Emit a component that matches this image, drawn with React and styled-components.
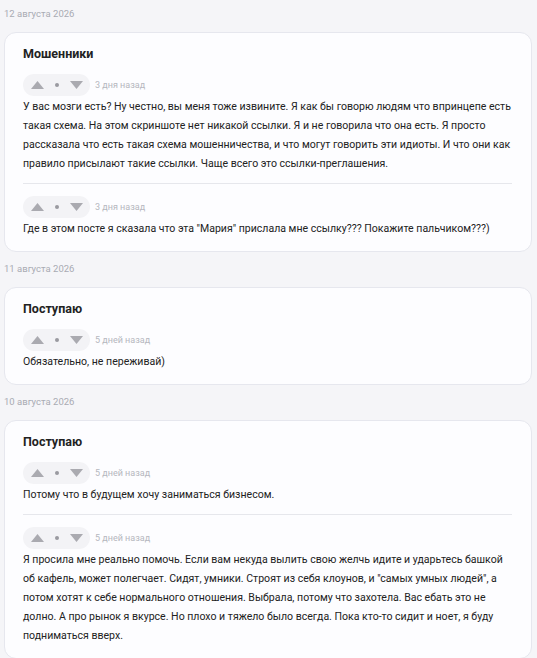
import React from "react";
import styled, { createGlobalStyle } from "styled-components";

const GlobalStyle = createGlobalStyle`
  body {
    margin: 0;
    background: #f5f5f8;
    font-family: Roboto, "Liberation Sans", sans-serif;
  }
`;

const Page = styled.div`
  padding: 0 5px 4px 4px;
`;

const DateLabel = styled.div`
  font-size: 9.5px;
  line-height: 16px;
  color: #a9abb3;
  padding: 6px 0 10px;
`;

const Card = styled.div`
  background: #fdfdff;
  border: 1px solid #e6e7ee;
  border-radius: 12px;
  padding: 12px 19px 13px 18px;
  margin-bottom: 3px;
`;

const Title = styled.div`
  font-size: 12.5px;
  font-weight: 700;
  line-height: 18px;
  color: #222;
  margin-bottom: 11px;
`;

const Comment = styled.div`
  & + & {
    border-top: 1px solid #e6e7ec;
    margin-top: 10px;
    padding-top: 12px;
  }
`;

const Meta = styled.div`
  display: flex;
  align-items: center;
  gap: 5px;
`;

const Votes = styled.div`
  display: flex;
  align-items: center;
  justify-content: space-between;
  width: 67px;
  height: 22px;
  box-sizing: border-box;
  padding: 0 7px 0 8px;
  border-radius: 11px;
  background: #f3f3f6;
`;

const Dot = styled.span`
  width: 4px;
  height: 4px;
  border-radius: 50%;
  background: #9a9aa0;
`;

const Time = styled.span`
  font-size: 9px;
  color: #b5b7be;
`;

const Text = styled.p`
  margin: 1px 0 0;
  font-size: 10.55px;
  line-height: 19px;
  color: #222;
`;

const Arrow = ({ down }) => (
  <svg width="13" height="8" viewBox="0 0 13 8">
    <path
      d={down ? "M0 0 L13 0 L6.5 8 Z" : "M6.5 0 L13 8 L0 8 Z"}
      fill="#aaaab0"
    />
  </svg>
);

const data = [
  {
    date: "12 августа 2026",
    title: "Мошенники",
    comments: [
      {
        time: "3 дня назад",
        text: "У вас мозги есть? Ну честно, вы меня тоже извините. Я как бы говорю людям что впринцепе есть такая схема. На этом скриншоте нет никакой ссылки. Я и не говорила что она есть. Я просто рассказала что есть такая схема мошенничества, и что могут говорить эти идиоты. И что они как правило присылают такие ссылки. Чаще всего это ссылки-преглашения.",
      },
      {
        time: "3 дня назад",
        text: "Где в этом посте я сказала что эта \"Мария\" прислала мне ссылку??? Покажите пальчиком???)",
      },
    ],
  },
  {
    date: "11 августа 2026",
    title: "Поступаю",
    comments: [{ time: "5 дней назад", text: "Обязательно, не переживай)" }],
  },
  {
    date: "10 августа 2026",
    title: "Поступаю",
    comments: [
      {
        time: "5 дней назад",
        text: "Потому что в будущем хочу заниматься бизнесом.",
      },
      {
        time: "5 дней назад",
        text: "Я просила мне реально помочь. Если вам некуда вылить свою желчь идите и ударьтесь башкой об кафель, может полегчает. Сидят, умники. Строят из себя клоунов, и \"самых умных людей\", а потом хотят к себе нормального отношения. Выбрала, потому что захотела. Вас ебать это не долно. А про рынок я вкурсе. Но плохо и тяжело было всегда. Пока кто-то сидит и ноет, я буду подниматься вверх.",
      },
    ],
  },
];

export default function App() {
  return (
    <Page>
      <GlobalStyle />
      {data.map((g, i) => (
        <div key={i}>
          <DateLabel>{g.date}</DateLabel>
          <Card>
            <Title>{g.title}</Title>
            {g.comments.map((c, j) => (
              <Comment key={j}>
                <Meta>
                  <Votes>
                    <Arrow />
                    <Dot />
                    <Arrow down />
                  </Votes>
                  <Time>{c.time}</Time>
                </Meta>
                <Text>{c.text}</Text>
              </Comment>
            ))}
          </Card>
        </div>
      ))}
    </Page>
  );
}
